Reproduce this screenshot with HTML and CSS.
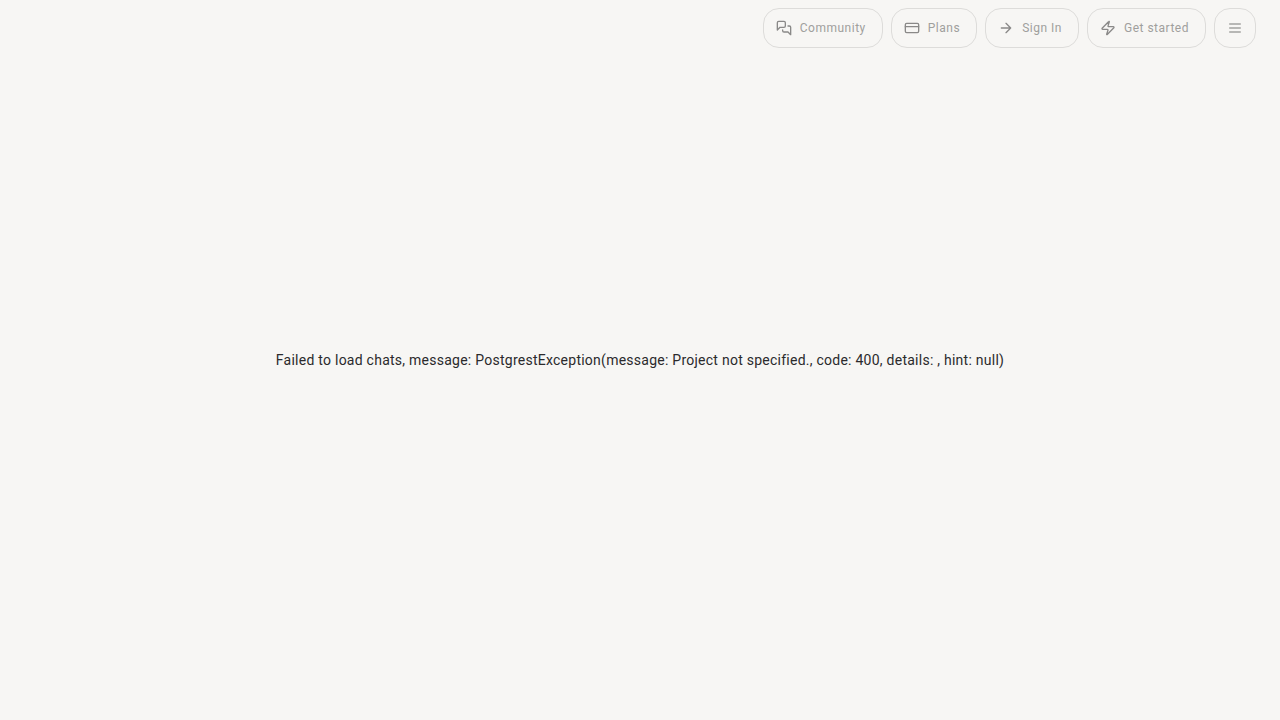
FILE: index.html
```
<!DOCTYPE html>
<html lang="en">
<head>
<meta charset="utf-8">
<meta name="viewport" content="width=device-width, initial-scale=1">
<title>Chats</title>
<link rel="stylesheet" href="styles.css">
</head>
<body>
<header class="topbar">
  <nav class="actions" aria-label="Main">
    <button class="pill" type="button">
      <svg class="icon" viewBox="0 0 24 24" aria-hidden="true"><path d="M14 9a2 2 0 0 1-2 2H6l-4 4V4a2 2 0 0 1 2-2h8a2 2 0 0 1 2 2z"/><path d="M18 9h2a2 2 0 0 1 2 2v11l-4-4h-6a2 2 0 0 1-2-2v-1"/></svg>
      <span>Community</span>
    </button>
    <button class="pill" type="button">
      <svg class="icon" viewBox="0 0 24 24" aria-hidden="true"><rect x="2" y="5" width="20" height="14" rx="2"/><path d="M2 10h20"/></svg>
      <span>Plans</span>
    </button>
    <button class="pill" type="button">
      <svg class="icon" viewBox="0 0 24 24" aria-hidden="true"><path d="M5 12h14M12 5l7 7-7 7"/></svg>
      <span>Sign In</span>
    </button>
    <button class="pill" type="button">
      <svg class="icon" viewBox="0 0 24 24" aria-hidden="true"><path d="M4 14a1 1 0 0 1-.78-1.63l9.9-10.2a.5.5 0 0 1 .86.46l-1.92 6.02A1 1 0 0 0 13 10h7a1 1 0 0 1 .78 1.63l-9.9 10.2a.5.5 0 0 1-.86-.46l1.92-6.02A1 1 0 0 0 11 14z"/></svg>
      <span>Get started</span>
    </button>
    <button class="pill pill-menu" type="button" aria-label="Menu">
      <svg class="icon" viewBox="0 0 24 24" aria-hidden="true"><path d="M4 6h16M4 12h16M4 18h16"/></svg>
    </button>
  </nav>
</header>
<main class="content">
  <p class="message">Failed to load chats, message: PostgrestException(message: Project not specified., code: 400, details: , hint: null)</p>
</main>
</body>
</html>
```
FILE: styles.css
```
* { box-sizing: border-box; }

body {
  margin: 0;
  min-height: 100vh;
  display: grid;
  grid-template-rows: 56px 1fr 56px;
  background: #f7f6f4;
  color: #2b2a2c;
  font-family: Roboto, sans-serif;
}

.topbar {
  padding: 8px 24px;
}

.actions {
  display: flex;
  justify-content: flex-end;
  gap: 8px;
}

.pill {
  display: flex;
  align-items: center;
  gap: 8px;
  height: 40px;
  padding: 0 16px 0 12px;
  border: 1px solid #dddcda;
  border-radius: 16px;
  background: transparent;
  color: #a09f9d;
  font: 400 12px/16px Roboto, sans-serif;
  letter-spacing: 0.042em;
}

.pill-menu { padding: 0 12px; }

.icon {
  width: 16px;
  height: 16px;
  fill: none;
  stroke: #8a8988;
  stroke-width: 2;
  stroke-linecap: round;
  stroke-linejoin: round;
}

.pill-menu .icon { stroke: #a3a2a0; }

.content {
  display: flex;
  align-items: center;
  justify-content: center;
}

.message {
  margin: 0;
  font-size: 14px;
  line-height: 20px;
  letter-spacing: 0.018em;
}
```
